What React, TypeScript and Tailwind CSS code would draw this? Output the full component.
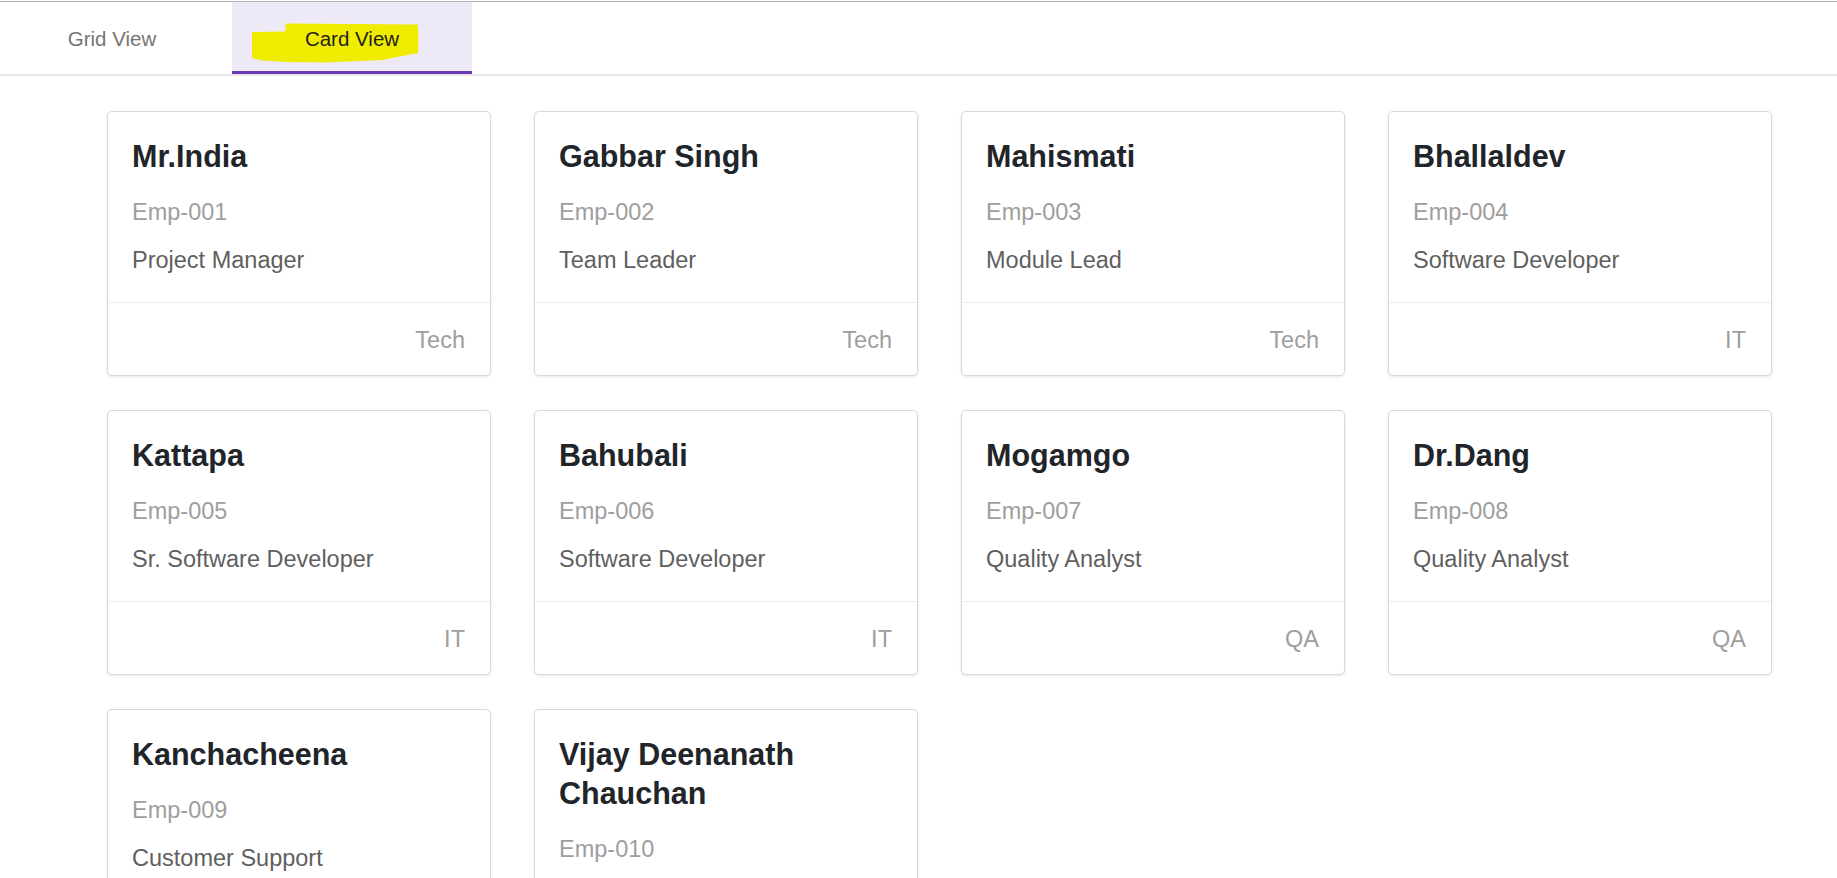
import React from "react";

type Employee = {
  name: string;
  id: string;
  role: string;
  dept: string;
};

const employees: Employee[] = [
  { name: "Mr.India", id: "Emp-001", role: "Project Manager", dept: "Tech" },
  { name: "Gabbar Singh", id: "Emp-002", role: "Team Leader", dept: "Tech" },
  { name: "Mahismati", id: "Emp-003", role: "Module Lead", dept: "Tech" },
  { name: "Bhallaldev", id: "Emp-004", role: "Software Developer", dept: "IT" },
  { name: "Kattapa", id: "Emp-005", role: "Sr. Software Developer", dept: "IT" },
  { name: "Bahubali", id: "Emp-006", role: "Software Developer", dept: "IT" },
  { name: "Mogamgo", id: "Emp-007", role: "Quality Analyst", dept: "QA" },
  { name: "Dr.Dang", id: "Emp-008", role: "Quality Analyst", dept: "QA" },
  { name: "Kanchacheena", id: "Emp-009", role: "Customer Support", dept: "Support" },
  { name: "Vijay Deenanath Chauchan", id: "Emp-010", role: "Don", dept: "Support" },
];

function EmployeeCard({ emp }: { emp: Employee }) {
  return (
    <div className="flex flex-col rounded-[5px] border border-[#d9d9d9] bg-white shadow-[0_1px_3px_rgba(0,0,0,0.10)]">
      <div className="flex-1 pl-6 pr-[25px] pt-[25px] pb-[24px]">
        <h2 className="text-[30.5px] font-bold leading-[39px] text-[#212529]">{emp.name}</h2>
        <p className="mt-[19px] text-[23.5px] leading-[35px] text-[#9e9e9e]">{emp.id}</p>
        <p className="mt-[13px] text-[23.5px] leading-[35px] text-[#5f5f5f]">{emp.role}</p>
      </div>
      <div className="border-t border-[#ededed] pl-6 pr-[25px] pt-[20px] pb-[17px] text-right text-[23.5px] leading-[35px] text-[#9e9e9e]">
        {emp.dept}
      </div>
    </div>
  );
}

export default function App() {
  return (
    <div className="min-h-screen bg-white font-['Liberation_Sans',Arial,sans-serif]">
      <div className="h-px bg-white" />
      <div className="h-px bg-[#b5b5b5]" />

      {/* Tabs */}
      <div className="flex border-b-2 border-[#e8e8e8]">
        <button className="flex h-[72px] w-[232px] items-center justify-center pr-2 pt-[3px] text-[20.5px] text-[#757575]">
          Grid View
        </button>
        <button className="relative flex h-[72px] w-[240px] items-center justify-center border-b-[3px] border-[#673ab7] bg-[#eee9f7] text-[20.5px] text-[#222]">
          {/* highlighter mark */}
          <svg className="absolute left-0 top-0" width="240" height="69" viewBox="0 0 240 69">
            <path
              d="M20 30 L53 29.5 L54 21.5 L120 22 L186 22.5 L186.5 40 L186 51 L150 58 L95 60.5 L55 60 L30 58.5 L20 56 Z"
              fill="#f0ec00"
            />
          </svg>
          <span className="relative mt-[5px]">Card View</span>
        </button>
      </div>

      {/* Cards */}
      <div className="grid grid-cols-[repeat(4,384px)] gap-x-[43px] gap-y-[34px] pl-[107px] pt-[35px] pb-10">
        {employees.map((emp) => (
          <EmployeeCard key={emp.id} emp={emp} />
        ))}
      </div>
    </div>
  );
}
